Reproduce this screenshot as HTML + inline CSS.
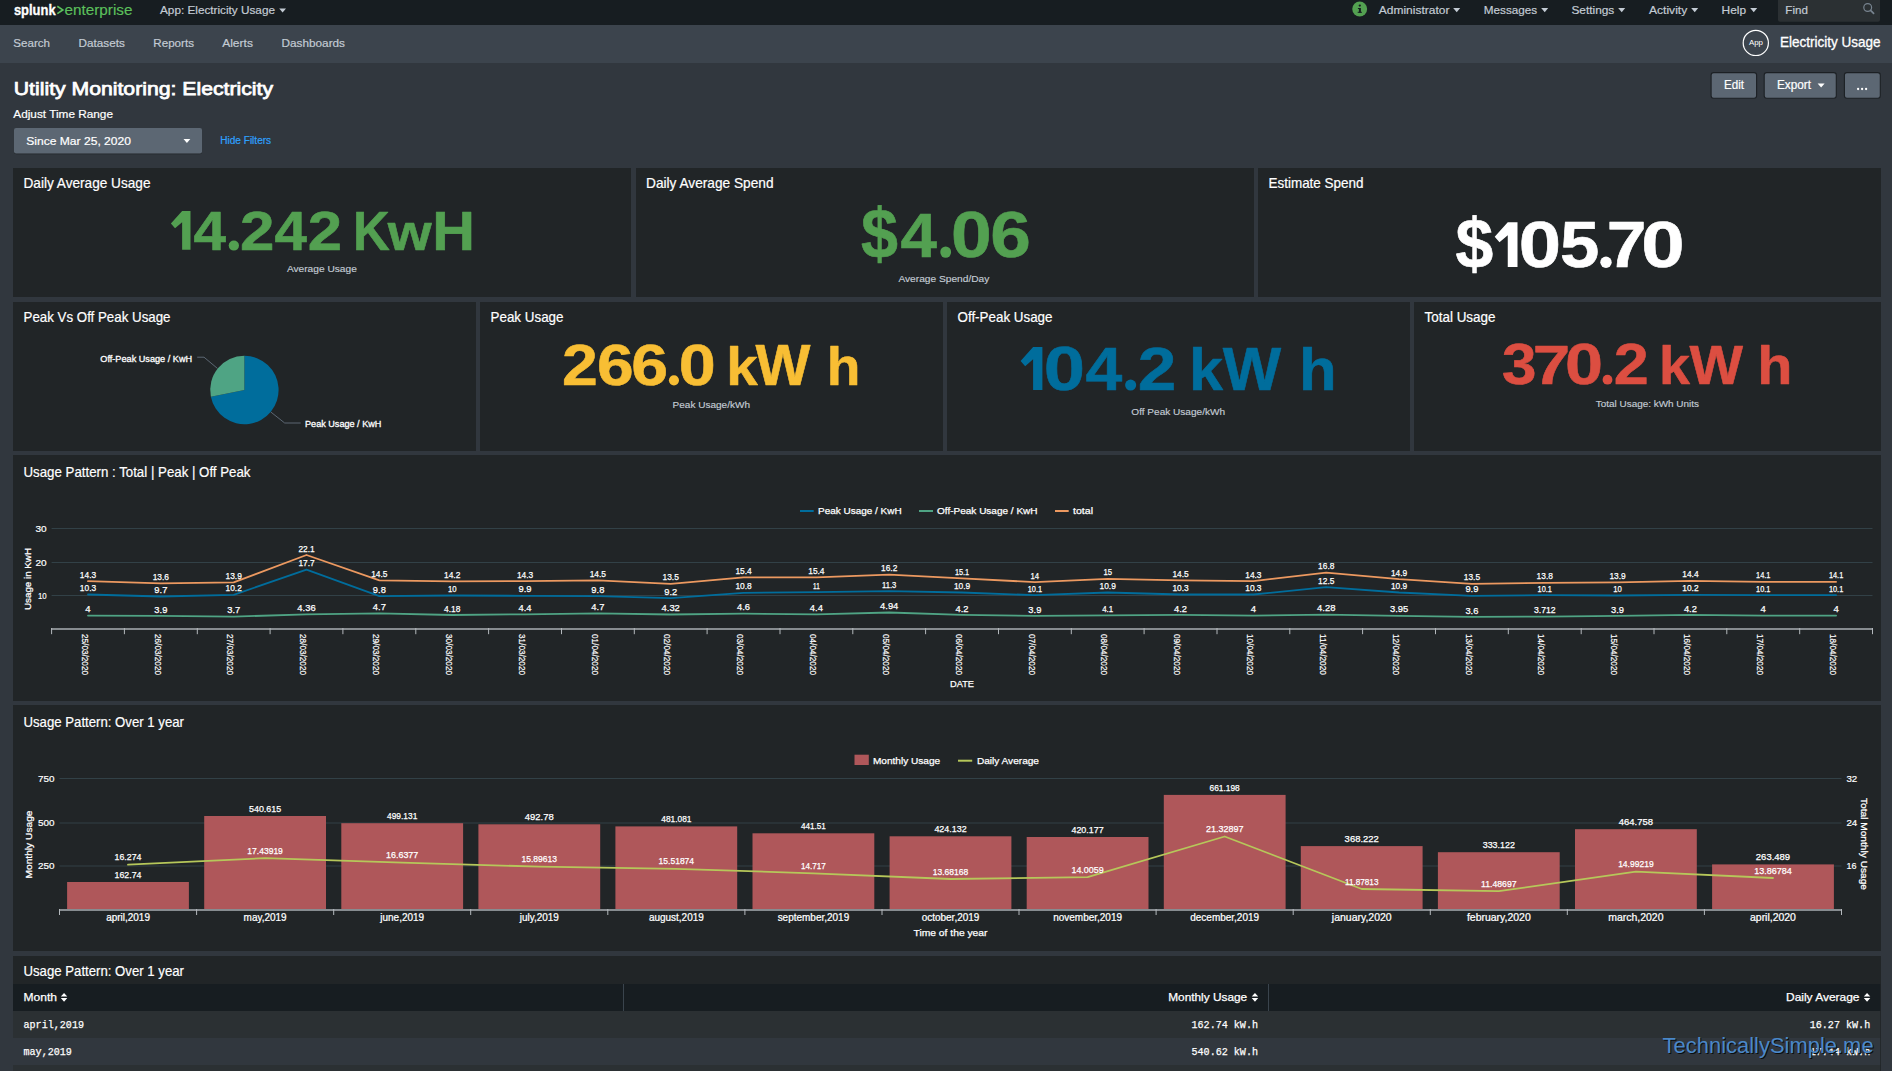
<!DOCTYPE html>
<html lang="en"><head><meta charset="utf-8"><title>Utility Monitoring: Electricity | Splunk</title>
<style>
html,body{margin:0;padding:0}
body{width:1892px;height:1071px;overflow:hidden;position:relative;background:#31373e;font-family:"Liberation Sans", sans-serif;}
svg{display:block;overflow:visible}
svg text{font-family:"Liberation Sans", sans-serif;white-space:pre}
section{overflow:hidden}
</style></head>
<body>
<header id="topbar" style="position:absolute;left:0;top:0;width:1892px;height:25px;background:#171d21"><svg width="1892" height="25" viewBox="0 0 1892 25"><text x="13.90" y="14.80" font-size="15.4" fill="#fff" font-weight="700" textLength="41.70" lengthAdjust="spacingAndGlyphs" stroke="#fff" stroke-width="0.35">splunk</text><path d="M57.3 6.3L62.8 9.9L57.3 13.6" fill="none" stroke="#5cc05c" stroke-width="1.7"/><text x="64.50" y="14.80" font-size="15" fill="#5cc05c" textLength="67.90" lengthAdjust="spacingAndGlyphs" stroke="#5cc05c" stroke-width="0.15">enterprise</text><text x="160.00" y="14.30" font-size="11.6" fill="#c3cbd4" textLength="115.00" lengthAdjust="spacingAndGlyphs" stroke="#c3cbd4" stroke-width="0.2">App: Electricity Usage</text><path d="M279.2 8.5H286.0L282.60 12.5Z" fill="#c3cbd4"/><circle cx="1359.7" cy="8.95" r="7.45" fill="#53a051"/><rect x="1358.9" y="8" width="2" height="4.6" fill="#171d21"/><circle cx="1359.8" cy="5.6" r="1.15" fill="#171d21"/><rect x="1357.9" y="8" width="2" height="1" fill="#171d21"/><rect x="1357.7" y="11.8" width="4.2" height="1" fill="#171d21"/><text x="1378.80" y="14.00" font-size="11.5" fill="#c3cbd4" textLength="70.60" lengthAdjust="spacingAndGlyphs" stroke="#c3cbd4" stroke-width="0.2">Administrator</text><path d="M1453.2 7.9H1460.2L1456.70 12.2Z" fill="#c3cbd4"/><text x="1483.80" y="14.00" font-size="11.5" fill="#c3cbd4" textLength="53.40" lengthAdjust="spacingAndGlyphs" stroke="#c3cbd4" stroke-width="0.2">Messages</text><path d="M1541.2 7.9H1548.2L1544.70 12.2Z" fill="#c3cbd4"/><text x="1571.40" y="14.00" font-size="11.5" fill="#c3cbd4" textLength="42.90" lengthAdjust="spacingAndGlyphs" stroke="#c3cbd4" stroke-width="0.2">Settings</text><path d="M1618.2 7.9H1625.2L1621.70 12.2Z" fill="#c3cbd4"/><text x="1649.00" y="14.00" font-size="11.5" fill="#c3cbd4" textLength="38.20" lengthAdjust="spacingAndGlyphs" stroke="#c3cbd4" stroke-width="0.2">Activity</text><path d="M1691.2 7.9H1698.2L1694.70 12.2Z" fill="#c3cbd4"/><text x="1721.60" y="14.00" font-size="11.5" fill="#c3cbd4" textLength="24.50" lengthAdjust="spacingAndGlyphs" stroke="#c3cbd4" stroke-width="0.2">Help</text><path d="M1750.2 7.9H1757.2L1753.70 12.2Z" fill="#c3cbd4"/><path d="M1778 0H1880V19.8a2 2 0 0 1-2 2H1780a2 2 0 0 1-2-2Z" fill="#2b3033"/><text x="1785.30" y="14.00" font-size="11.5" fill="#c3cbd4" textLength="22.60" lengthAdjust="spacingAndGlyphs" stroke="#c3cbd4" stroke-width="0.2">Find</text><circle cx="1867.7" cy="7.5" r="3.9" fill="none" stroke="#77838f" stroke-width="1.2"/><path d="M1870.6 10.4L1873.6 13.4" stroke="#77838f" stroke-width="1.7" stroke-linecap="round"/></svg></header>
<nav id="appnav" style="position:absolute;left:0;top:25px;width:1892px;height:38px;background:#3c444d"><svg width="1892" height="38" viewBox="0 25 1892 38"><text x="13.30" y="47.10" font-size="11.8" fill="#c3cbd4" textLength="36.70" lengthAdjust="spacingAndGlyphs" stroke="#c3cbd4" stroke-width="0.2">Search</text><text x="78.60" y="47.10" font-size="11.8" fill="#c3cbd4" textLength="46.30" lengthAdjust="spacingAndGlyphs" stroke="#c3cbd4" stroke-width="0.2">Datasets</text><text x="153.30" y="47.10" font-size="11.8" fill="#c3cbd4" textLength="40.70" lengthAdjust="spacingAndGlyphs" stroke="#c3cbd4" stroke-width="0.2">Reports</text><text x="222.20" y="47.10" font-size="11.8" fill="#c3cbd4" textLength="30.70" lengthAdjust="spacingAndGlyphs" stroke="#c3cbd4" stroke-width="0.2">Alerts</text><text x="281.50" y="47.10" font-size="11.8" fill="#c3cbd4" textLength="63.50" lengthAdjust="spacingAndGlyphs" stroke="#c3cbd4" stroke-width="0.2">Dashboards</text><circle cx="1755.8" cy="42.9" r="12.6" fill="none" stroke="#fff" stroke-width="1.2"/><text x="1749.00" y="45.20" font-size="7.5" fill="#fff" textLength="14.00" lengthAdjust="spacingAndGlyphs">App</text><text x="1780.00" y="47.10" font-size="14.1" fill="#fff" textLength="100.60" lengthAdjust="spacingAndGlyphs" stroke="#fff" stroke-width="0.3">Electricity Usage</text></svg></nav>
<div id="dash-header" style="position:absolute;left:0;top:63px;width:1892px;height:105px"><svg width="1892" height="105" viewBox="0 63 1892 105"><text x="13.80" y="95.20" font-size="18.6" fill="#fff" textLength="259.20" lengthAdjust="spacingAndGlyphs" stroke="#fff" stroke-width="0.75">Utility Monitoring: Electricity</text><text x="13.30" y="118.30" font-size="11.8" fill="#fff" textLength="99.70" lengthAdjust="spacingAndGlyphs" stroke="#fff" stroke-width="0.2">Adjust Time Range</text><rect x="14" y="128.4" width="188" height="25.8" rx="2.5" fill="#22272b"/><rect x="14" y="128" width="188" height="25.6" rx="2" fill="#5c6773"/><text x="26.20" y="145.10" font-size="11.8" fill="#fff" textLength="104.80" lengthAdjust="spacingAndGlyphs" stroke="#fff" stroke-width="0.2">Since Mar 25, 2020</text><path d="M183.5 138.9H190.3L186.90 143.1Z" fill="#fff"/><text x="220.30" y="144.20" font-size="10" fill="#2ea1ff" textLength="50.80" lengthAdjust="spacingAndGlyphs" stroke="#2ea1ff" stroke-width="0.2">Hide Filters</text><rect x="1711.1" y="72.6" width="45.5" height="25.7" rx="2.5" fill="#5c6773" stroke="#1c2024" stroke-width="1.1"/><rect x="1764.2" y="72.6" width="72.1" height="25.7" rx="2.5" fill="#5c6773" stroke="#1c2024" stroke-width="1.1"/><rect x="1844.4" y="72.6" width="35.9" height="25.7" rx="2.5" fill="#5c6773" stroke="#1c2024" stroke-width="1.1"/><text x="1724.00" y="89.20" font-size="12" fill="#fff" textLength="20.00" lengthAdjust="spacingAndGlyphs" stroke="#fff" stroke-width="0.2">Edit</text><text x="1777.00" y="89.20" font-size="12" fill="#fff" textLength="34.00" lengthAdjust="spacingAndGlyphs" stroke="#fff" stroke-width="0.2">Export</text><path d="M1817.6 83.5H1824.6L1821.10 87.5Z" fill="#fff"/><circle cx="1858.1" cy="89" r="1.15" fill="#fff"/><circle cx="1862.1" cy="89" r="1.15" fill="#fff"/><circle cx="1866.1" cy="89" r="1.15" fill="#fff"/></svg></div>
<section id="p-daily-usage" style="position:absolute;left:13px;top:168px;width:618px;height:129px;background:#212527"><svg width="618" height="129" viewBox="13 168 618 129"><text x="23.50" y="188.30" font-size="14.1" fill="#fff" textLength="127.00" lengthAdjust="spacingAndGlyphs" stroke="#fff" stroke-width="0.2">Daily Average Usage</text><path d="M182.13 210.90L190.50 210.90L190.50 249.80L182.13 249.80L182.13 222.18L175.02 228.37L170.90 223.58Z" fill="#53a051"/><text transform="translate(193.42,249.50) scale(0.5843,0.5567)" font-size="100" font-weight="700" fill="#53a051" stroke="#53a051" stroke-width="1.052" stroke-linejoin="round">4</text><ellipse cx="233.85" cy="245.60" rx="5.15" ry="5.00" fill="#53a051"/><text transform="translate(240.05,249.50) scale(0.6190,0.5571)" font-size="100" font-weight="700" fill="#53a051" stroke="#53a051" stroke-width="1.020" stroke-linejoin="round">2</text><text transform="translate(274.62,249.50) scale(0.5825,0.5567)" font-size="100" font-weight="700" fill="#53a051" stroke="#53a051" stroke-width="1.053" stroke-linejoin="round">4</text><text transform="translate(307.76,249.50) scale(0.6169,0.5571)" font-size="100" font-weight="700" fill="#53a051" stroke="#53a051" stroke-width="1.022" stroke-linejoin="round">2</text><text transform="translate(353.09,249.50) scale(0.5093,0.5567)" font-size="100" font-weight="700" fill="#53a051" stroke="#53a051" stroke-width="1.126" stroke-linejoin="round">K</text><text transform="translate(387.77,249.50) scale(0.5647,0.5129)" font-size="100" font-weight="700" fill="#53a051" stroke="#53a051" stroke-width="1.114" stroke-linejoin="round">w</text><text transform="translate(432.24,249.50) scale(0.5919,0.5567)" font-size="100" font-weight="700" fill="#53a051" stroke="#53a051" stroke-width="1.045" stroke-linejoin="round">H</text><text x="286.90" y="271.90" font-size="9.3" fill="#c3cbd4" textLength="69.90" lengthAdjust="spacingAndGlyphs" stroke="#c3cbd4" stroke-width="0.15">Average Usage</text></svg></section>
<section id="p-daily-spend" style="position:absolute;left:636px;top:168px;width:618px;height:129px;background:#212527"><svg width="618" height="129" viewBox="636 168 618 129"><text x="646.00" y="188.30" font-size="14.1" fill="#fff" textLength="127.50" lengthAdjust="spacingAndGlyphs" stroke="#fff" stroke-width="0.2">Daily Average Spend</text><text transform="translate(860.92,258.20) scale(0.6656,0.7006)" font-size="100" font-weight="700" fill="#53a051" stroke="#53a051" stroke-width="0.878" stroke-linejoin="round">$</text><text transform="translate(900.61,256.60) scale(0.6553,0.6381)" font-size="100" font-weight="700" fill="#53a051" stroke="#53a051" stroke-width="0.928" stroke-linejoin="round">4</text><ellipse cx="945.70" cy="252.10" rx="5.40" ry="5.70" fill="#53a051"/><text transform="translate(951.11,257.07) scale(0.7317,0.6426)" font-size="100" font-weight="700" fill="#53a051" stroke="#53a051" stroke-width="0.873" stroke-linejoin="round">0</text><text transform="translate(990.33,257.07) scale(0.7302,0.6426)" font-size="100" font-weight="700" fill="#53a051" stroke="#53a051" stroke-width="0.874" stroke-linejoin="round">6</text><text x="898.40" y="282.10" font-size="9.3" fill="#c3cbd4" textLength="91.00" lengthAdjust="spacingAndGlyphs" stroke="#c3cbd4" stroke-width="0.15">Average Spend/Day</text></svg></section>
<section id="p-estimate" style="position:absolute;left:1258px;top:168px;width:623px;height:129px;background:#212527"><svg width="623" height="129" viewBox="1258 168 623 129"><text x="1268.50" y="188.30" font-size="14.1" fill="#fff" textLength="95.00" lengthAdjust="spacingAndGlyphs" stroke="#fff" stroke-width="0.2">Estimate Spend</text><text transform="translate(1455.40,268.27) scale(0.6789,0.7043)" font-size="100" font-weight="700" fill="#fff" stroke="#fff" stroke-width="0.868" stroke-linejoin="round">$</text><path d="M1507.76 222.30L1517.50 222.30L1517.50 266.90L1507.76 266.90L1507.76 235.23L1499.49 242.33L1494.70 236.84Z" fill="#fff"/><text transform="translate(1518.69,267.17) scale(0.7612,0.6455)" font-size="100" font-weight="700" fill="#fff" stroke="#fff" stroke-width="0.853" stroke-linejoin="round">0</text><text transform="translate(1560.12,267.17) scale(0.7075,0.6478)" font-size="100" font-weight="700" fill="#fff" stroke="#fff" stroke-width="0.885" stroke-linejoin="round">5</text><ellipse cx="1606.00" cy="262.20" rx="5.70" ry="5.70" fill="#fff"/><text transform="translate(1606.83,266.60) scale(0.7139,0.6395)" font-size="100" font-weight="700" fill="#fff" stroke="#fff" stroke-width="0.887" stroke-linejoin="round">7</text><text transform="translate(1641.31,267.17) scale(0.7801,0.6455)" font-size="100" font-weight="700" fill="#fff" stroke="#fff" stroke-width="0.842" stroke-linejoin="round">0</text></svg></section>
<section id="p-pie" style="position:absolute;left:13px;top:302px;width:463px;height:149px;background:#212527"><svg width="463" height="149" viewBox="13 302 463 149"><text x="23.50" y="322.10" font-size="14.1" fill="#fff" textLength="147.00" lengthAdjust="spacingAndGlyphs" stroke="#fff" stroke-width="0.2">Peak Vs Off Peak Usage</text><path d="M244.4 390L244.4 355.8A34.2 34.2 0 1 1 210.87 396.72Z" fill="#006d9c"/><path d="M244.4 390L210.87 396.72A34.2 34.2 0 0 1 244.4 355.8Z" fill="#4fa484"/><path d="M197.2 357.2H204L217.3 368.3" fill="none" stroke="#5c6773" stroke-width="1"/><path d="M270.8 412L284.7 423H300.7" fill="none" stroke="#5c6773" stroke-width="1"/><text x="100.30" y="362.00" font-size="9.4" fill="#fff" textLength="91.80" lengthAdjust="spacingAndGlyphs" stroke="#fff" stroke-width="0.3">Off-Peak Usage / KwH</text><text x="305.00" y="427.20" font-size="9.4" fill="#fff" textLength="76.40" lengthAdjust="spacingAndGlyphs" stroke="#fff" stroke-width="0.3">Peak Usage / KwH</text></svg></section>
<section id="p-peak" style="position:absolute;left:480px;top:302px;width:463px;height:149px;background:#212527"><svg width="463" height="149" viewBox="480 302 463 149"><text x="490.50" y="322.10" font-size="14.1" fill="#fff" textLength="73.00" lengthAdjust="spacingAndGlyphs" stroke="#fff" stroke-width="0.2">Peak Usage</text><text transform="translate(562.07,384.70) scale(0.6439,0.5714)" font-size="100" font-weight="700" fill="#f8be34" stroke="#f8be34" stroke-width="0.987" stroke-linejoin="round">2</text><text transform="translate(597.08,384.64) scale(0.6599,0.5706)" font-size="100" font-weight="700" fill="#f8be34" stroke="#f8be34" stroke-width="0.975" stroke-linejoin="round">6</text><text transform="translate(631.18,384.64) scale(0.6620,0.5706)" font-size="100" font-weight="700" fill="#f8be34" stroke="#f8be34" stroke-width="0.974" stroke-linejoin="round">6</text><ellipse cx="673.95" cy="380.30" rx="5.05" ry="5.10" fill="#f8be34"/><text transform="translate(678.87,384.64) scale(0.6644,0.5706)" font-size="100" font-weight="700" fill="#f8be34" stroke="#f8be34" stroke-width="0.972" stroke-linejoin="round">0</text><text transform="translate(726.35,384.70) scale(0.5664,0.5410)" font-size="100" font-weight="700" fill="#f8be34" stroke="#f8be34" stroke-width="1.084" stroke-linejoin="round">k</text><text transform="translate(755.44,384.70) scale(0.5818,0.5698)" font-size="100" font-weight="700" fill="#f8be34" stroke="#f8be34" stroke-width="1.042" stroke-linejoin="round">W</text><text transform="translate(826.75,384.70) scale(0.5511,0.5410)" font-size="100" font-weight="700" fill="#f8be34" stroke="#f8be34" stroke-width="1.099" stroke-linejoin="round">h</text><text x="672.60" y="407.80" font-size="9.3" fill="#c3cbd4" textLength="77.40" lengthAdjust="spacingAndGlyphs" stroke="#c3cbd4" stroke-width="0.15">Peak Usage/kWh</text></svg></section>
<section id="p-offpeak" style="position:absolute;left:947px;top:302px;width:463px;height:149px;background:#212527"><svg width="463" height="149" viewBox="947 302 463 149"><text x="957.50" y="322.10" font-size="14.1" fill="#fff" textLength="95.00" lengthAdjust="spacingAndGlyphs" stroke="#fff" stroke-width="0.2">Off-Peak Usage</text><path d="M1033.09 346.90L1042.40 346.90L1042.40 389.90L1033.09 389.90L1033.09 359.37L1025.18 366.21L1020.60 360.92Z" fill="#006d9c"/><text transform="translate(1043.66,389.89) scale(0.7422,0.6243)" font-size="100" font-weight="700" fill="#006d9c" stroke="#006d9c" stroke-width="0.878" stroke-linejoin="round">0</text><text transform="translate(1085.40,389.60) scale(0.6609,0.6163)" font-size="100" font-weight="700" fill="#006d9c" stroke="#006d9c" stroke-width="0.940" stroke-linejoin="round">4</text><ellipse cx="1130.65" cy="385.05" rx="5.55" ry="5.55" fill="#006d9c"/><text transform="translate(1137.69,389.60) scale(0.6937,0.6201)" font-size="100" font-weight="700" fill="#006d9c" stroke="#006d9c" stroke-width="0.913" stroke-linejoin="round">2</text><text transform="translate(1188.93,389.60) scale(0.6115,0.5851)" font-size="100" font-weight="700" fill="#006d9c" stroke="#006d9c" stroke-width="1.003" stroke-linejoin="round">k</text><text transform="translate(1222.74,389.60) scale(0.6190,0.6163)" font-size="100" font-weight="700" fill="#006d9c" stroke="#006d9c" stroke-width="0.971" stroke-linejoin="round">W</text><text transform="translate(1299.00,389.60) scale(0.6159,0.5851)" font-size="100" font-weight="700" fill="#006d9c" stroke="#006d9c" stroke-width="0.999" stroke-linejoin="round">h</text><text x="1131.30" y="414.70" font-size="9.3" fill="#c3cbd4" textLength="93.80" lengthAdjust="spacingAndGlyphs" stroke="#c3cbd4" stroke-width="0.15">Off Peak Usage/kWh</text></svg></section>
<section id="p-total" style="position:absolute;left:1414px;top:302px;width:467px;height:149px;background:#212527"><svg width="467" height="149" viewBox="1414 302 467 149"><text x="1424.50" y="322.10" font-size="14.1" fill="#fff" textLength="71.00" lengthAdjust="spacingAndGlyphs" stroke="#fff" stroke-width="0.2">Total Usage</text><text transform="translate(1501.98,383.76) scale(0.6196,0.5666)" font-size="100" font-weight="700" fill="#dc4e41" stroke="#dc4e41" stroke-width="1.012" stroke-linejoin="round">3</text><text transform="translate(1532.71,383.60) scale(0.6734,0.5611)" font-size="100" font-weight="700" fill="#dc4e41" stroke="#dc4e41" stroke-width="0.972" stroke-linejoin="round">7</text><text transform="translate(1565.10,383.85) scale(0.6834,0.5678)" font-size="100" font-weight="700" fill="#dc4e41" stroke="#dc4e41" stroke-width="0.959" stroke-linejoin="round">0</text><ellipse cx="1607.50" cy="379.70" rx="4.90" ry="4.90" fill="#dc4e41"/><text transform="translate(1613.72,383.60) scale(0.6294,0.5643)" font-size="100" font-weight="700" fill="#dc4e41" stroke="#dc4e41" stroke-width="1.005" stroke-linejoin="round">2</text><text transform="translate(1659.12,383.60) scale(0.5561,0.5327)" font-size="100" font-weight="700" fill="#dc4e41" stroke="#dc4e41" stroke-width="1.102" stroke-linejoin="round">k</text><text transform="translate(1689.54,383.60) scale(0.5669,0.5611)" font-size="100" font-weight="700" fill="#dc4e41" stroke="#dc4e41" stroke-width="1.064" stroke-linejoin="round">W</text><text transform="translate(1757.28,383.60) scale(0.5762,0.5327)" font-size="100" font-weight="700" fill="#dc4e41" stroke="#dc4e41" stroke-width="1.082" stroke-linejoin="round">h</text><text x="1595.80" y="406.60" font-size="9.3" fill="#c3cbd4" textLength="103.20" lengthAdjust="spacingAndGlyphs" stroke="#c3cbd4" stroke-width="0.15">Total Usage: kWh Units</text></svg></section>
<section id="p-line" style="position:absolute;left:13px;top:455px;width:1868px;height:246px;background:#212527"><svg width="1868" height="246" viewBox="13 455 1868 246"><text x="23.50" y="476.70" font-size="14.1" fill="#fff" textLength="227.00" lengthAdjust="spacingAndGlyphs" stroke="#fff" stroke-width="0.2">Usage Pattern : Total | Peak | Off Peak</text><path d="M800 511H813.7" stroke="#006d9c" stroke-width="2"/><text x="818.00" y="514.20" font-size="9.7" fill="#fff" textLength="83.60" lengthAdjust="spacingAndGlyphs" stroke="#fff" stroke-width="0.25">Peak Usage / KwH</text><path d="M919 511H933" stroke="#4fa484" stroke-width="2"/><text x="937.00" y="514.20" font-size="9.7" fill="#fff" textLength="100.60" lengthAdjust="spacingAndGlyphs" stroke="#fff" stroke-width="0.25">Off-Peak Usage / KwH</text><path d="M1055 511H1068.7" stroke="#ec9960" stroke-width="2"/><text x="1073.00" y="514.20" font-size="9.7" fill="#fff" textLength="20.00" lengthAdjust="spacingAndGlyphs" stroke="#fff" stroke-width="0.25">total</text><path d="M51.6 595.5H1872.5" stroke="#324147" stroke-width="1"/><text x="46.60" y="599.10" font-size="9.4" fill="#fff" text-anchor="end" textLength="8.70" lengthAdjust="spacingAndGlyphs" stroke="#fff" stroke-width="0.2">10</text><path d="M51.6 562.5H1872.5" stroke="#324147" stroke-width="1"/><text x="46.60" y="566.00" font-size="9.4" fill="#fff" text-anchor="end" textLength="11.20" lengthAdjust="spacingAndGlyphs" stroke="#fff" stroke-width="0.2">20</text><path d="M51.6 528.5H1872.5" stroke="#324147" stroke-width="1"/><text x="46.60" y="532.30" font-size="9.4" fill="#fff" text-anchor="end" textLength="11.20" lengthAdjust="spacingAndGlyphs" stroke="#fff" stroke-width="0.2">30</text><text transform="translate(31.3,579) rotate(-90)" font-size="9.7" fill="#fff" stroke="#fff" stroke-width="0.25" text-anchor="middle" textLength="62" lengthAdjust="spacingAndGlyphs">Usage in KwH</text><polyline points="88.0,594.5 160.9,596.5 233.7,594.8 306.5,569.7 379.4,596.2 452.2,595.5 525.0,595.8 597.9,596.2 670.7,598.2 743.5,592.8 816.4,592.1 889.2,591.1 962.0,592.5 1034.9,595.2 1107.7,592.5 1180.6,594.5 1253.4,594.5 1326.2,587.1 1399.1,592.5 1471.9,595.8 1544.7,595.2 1617.6,595.5 1690.4,594.8 1763.2,595.2 1836.1,595.2" fill="none" stroke="#006d9c" stroke-width="1.8" stroke-linejoin="round" stroke-linecap="round"/><polyline points="88.0,615.6 160.9,615.9 233.7,616.6 306.5,614.4 379.4,613.3 452.2,615.0 525.0,614.3 597.9,613.3 670.7,614.5 743.5,613.6 816.4,614.3 889.2,612.5 962.0,614.9 1034.9,615.9 1107.7,615.3 1180.6,614.9 1253.4,615.6 1326.2,614.7 1399.1,615.8 1471.9,616.9 1544.7,616.6 1617.6,615.9 1690.4,614.9 1763.2,615.6 1836.1,615.6" fill="none" stroke="#4fa484" stroke-width="1.8" stroke-linejoin="round" stroke-linecap="round"/><polyline points="88.0,581.1 160.9,583.4 233.7,582.4 306.5,555.0 379.4,580.4 452.2,581.4 525.0,581.1 597.9,580.4 670.7,583.8 743.5,577.4 816.4,577.4 889.2,574.7 962.0,578.4 1034.9,582.1 1107.7,578.8 1180.6,580.4 1253.4,581.1 1326.2,572.7 1399.1,579.1 1471.9,583.8 1544.7,582.8 1617.6,582.4 1690.4,580.8 1763.2,581.8 1836.1,581.8" fill="none" stroke="#ec9960" stroke-width="1.8" stroke-linejoin="round" stroke-linecap="round"/><text x="79.87" y="591.10" font-size="9.2" fill="#fff" stroke="#fff" stroke-width="0.25" textLength="16.30" lengthAdjust="spacingAndGlyphs">10.3</text><text x="154.35" y="593.11" font-size="9.2" fill="#fff" stroke="#fff" stroke-width="0.25" textLength="13.00" lengthAdjust="spacingAndGlyphs">9.7</text><text x="225.54" y="591.43" font-size="9.2" fill="#fff" stroke="#fff" stroke-width="0.25" textLength="16.30" lengthAdjust="spacingAndGlyphs">10.2</text><text x="298.38" y="566.31" font-size="9.2" fill="#fff" stroke="#fff" stroke-width="0.25" textLength="16.30" lengthAdjust="spacingAndGlyphs">17.7</text><text x="372.86" y="592.77" font-size="9.2" fill="#fff" stroke="#fff" stroke-width="0.25" textLength="13.00" lengthAdjust="spacingAndGlyphs">9.8</text><text x="447.90" y="592.10" font-size="9.2" fill="#fff" stroke="#fff" stroke-width="0.25" textLength="8.60" lengthAdjust="spacingAndGlyphs">10</text><text x="518.53" y="592.44" font-size="9.2" fill="#fff" stroke="#fff" stroke-width="0.25" textLength="13.00" lengthAdjust="spacingAndGlyphs">9.9</text><text x="591.37" y="592.77" font-size="9.2" fill="#fff" stroke="#fff" stroke-width="0.25" textLength="13.00" lengthAdjust="spacingAndGlyphs">9.8</text><text x="664.21" y="594.78" font-size="9.2" fill="#fff" stroke="#fff" stroke-width="0.25" textLength="13.00" lengthAdjust="spacingAndGlyphs">9.2</text><text x="735.39" y="589.42" font-size="9.2" fill="#fff" stroke="#fff" stroke-width="0.25" textLength="16.30" lengthAdjust="spacingAndGlyphs">10.8</text><text x="813.08" y="588.75" font-size="9.2" fill="#fff" stroke="#fff" stroke-width="0.25" textLength="6.60" lengthAdjust="spacingAndGlyphs">11</text><text x="882.06" y="587.75" font-size="9.2" fill="#fff" stroke="#fff" stroke-width="0.25" textLength="14.30" lengthAdjust="spacingAndGlyphs">11.3</text><text x="953.90" y="589.09" font-size="9.2" fill="#fff" stroke="#fff" stroke-width="0.25" textLength="16.30" lengthAdjust="spacingAndGlyphs">10.9</text><text x="1027.74" y="591.76" font-size="9.2" fill="#fff" stroke="#fff" stroke-width="0.25" textLength="14.30" lengthAdjust="spacingAndGlyphs">10.1</text><text x="1099.57" y="589.09" font-size="9.2" fill="#fff" stroke="#fff" stroke-width="0.25" textLength="16.30" lengthAdjust="spacingAndGlyphs">10.9</text><text x="1172.41" y="591.10" font-size="9.2" fill="#fff" stroke="#fff" stroke-width="0.25" textLength="16.30" lengthAdjust="spacingAndGlyphs">10.3</text><text x="1245.24" y="591.10" font-size="9.2" fill="#fff" stroke="#fff" stroke-width="0.25" textLength="16.30" lengthAdjust="spacingAndGlyphs">10.3</text><text x="1318.08" y="583.73" font-size="9.2" fill="#fff" stroke="#fff" stroke-width="0.25" textLength="16.30" lengthAdjust="spacingAndGlyphs">12.5</text><text x="1390.92" y="589.09" font-size="9.2" fill="#fff" stroke="#fff" stroke-width="0.25" textLength="16.30" lengthAdjust="spacingAndGlyphs">10.9</text><text x="1465.40" y="592.44" font-size="9.2" fill="#fff" stroke="#fff" stroke-width="0.25" textLength="13.00" lengthAdjust="spacingAndGlyphs">9.9</text><text x="1537.59" y="591.76" font-size="9.2" fill="#fff" stroke="#fff" stroke-width="0.25" textLength="14.30" lengthAdjust="spacingAndGlyphs">10.1</text><text x="1613.27" y="592.10" font-size="9.2" fill="#fff" stroke="#fff" stroke-width="0.25" textLength="8.60" lengthAdjust="spacingAndGlyphs">10</text><text x="1682.26" y="591.43" font-size="9.2" fill="#fff" stroke="#fff" stroke-width="0.25" textLength="16.30" lengthAdjust="spacingAndGlyphs">10.2</text><text x="1756.10" y="591.76" font-size="9.2" fill="#fff" stroke="#fff" stroke-width="0.25" textLength="14.30" lengthAdjust="spacingAndGlyphs">10.1</text><text x="1828.93" y="591.76" font-size="9.2" fill="#fff" stroke="#fff" stroke-width="0.25" textLength="14.30" lengthAdjust="spacingAndGlyphs">10.1</text><text x="85.37" y="612.20" font-size="9.2" fill="#fff" stroke="#fff" stroke-width="0.25" textLength="5.30" lengthAdjust="spacingAndGlyphs">4</text><text x="154.35" y="612.53" font-size="9.2" fill="#fff" stroke="#fff" stroke-width="0.25" textLength="13.00" lengthAdjust="spacingAndGlyphs">3.9</text><text x="227.19" y="613.21" font-size="9.2" fill="#fff" stroke="#fff" stroke-width="0.25" textLength="13.00" lengthAdjust="spacingAndGlyphs">3.7</text><text x="297.38" y="610.99" font-size="9.2" fill="#fff" stroke="#fff" stroke-width="0.25" textLength="18.30" lengthAdjust="spacingAndGlyphs">4.36</text><text x="372.86" y="609.86" font-size="9.2" fill="#fff" stroke="#fff" stroke-width="0.25" textLength="13.00" lengthAdjust="spacingAndGlyphs">4.7</text><text x="444.05" y="611.60" font-size="9.2" fill="#fff" stroke="#fff" stroke-width="0.25" textLength="16.30" lengthAdjust="spacingAndGlyphs">4.18</text><text x="518.53" y="610.86" font-size="9.2" fill="#fff" stroke="#fff" stroke-width="0.25" textLength="13.00" lengthAdjust="spacingAndGlyphs">4.4</text><text x="591.37" y="609.86" font-size="9.2" fill="#fff" stroke="#fff" stroke-width="0.25" textLength="13.00" lengthAdjust="spacingAndGlyphs">4.7</text><text x="661.56" y="611.13" font-size="9.2" fill="#fff" stroke="#fff" stroke-width="0.25" textLength="18.30" lengthAdjust="spacingAndGlyphs">4.32</text><text x="737.04" y="610.19" font-size="9.2" fill="#fff" stroke="#fff" stroke-width="0.25" textLength="13.00" lengthAdjust="spacingAndGlyphs">4.6</text><text x="809.88" y="610.86" font-size="9.2" fill="#fff" stroke="#fff" stroke-width="0.25" textLength="13.00" lengthAdjust="spacingAndGlyphs">4.4</text><text x="880.06" y="609.05" font-size="9.2" fill="#fff" stroke="#fff" stroke-width="0.25" textLength="18.30" lengthAdjust="spacingAndGlyphs">4.94</text><text x="955.55" y="611.53" font-size="9.2" fill="#fff" stroke="#fff" stroke-width="0.25" textLength="13.00" lengthAdjust="spacingAndGlyphs">4.2</text><text x="1028.39" y="612.53" font-size="9.2" fill="#fff" stroke="#fff" stroke-width="0.25" textLength="13.00" lengthAdjust="spacingAndGlyphs">3.9</text><text x="1102.22" y="611.87" font-size="9.2" fill="#fff" stroke="#fff" stroke-width="0.25" textLength="11.00" lengthAdjust="spacingAndGlyphs">4.1</text><text x="1174.06" y="611.53" font-size="9.2" fill="#fff" stroke="#fff" stroke-width="0.25" textLength="13.00" lengthAdjust="spacingAndGlyphs">4.2</text><text x="1250.74" y="612.20" font-size="9.2" fill="#fff" stroke="#fff" stroke-width="0.25" textLength="5.30" lengthAdjust="spacingAndGlyphs">4</text><text x="1317.08" y="611.26" font-size="9.2" fill="#fff" stroke="#fff" stroke-width="0.25" textLength="18.30" lengthAdjust="spacingAndGlyphs">4.28</text><text x="1389.92" y="612.37" font-size="9.2" fill="#fff" stroke="#fff" stroke-width="0.25" textLength="18.30" lengthAdjust="spacingAndGlyphs">3.95</text><text x="1465.40" y="613.54" font-size="9.2" fill="#fff" stroke="#fff" stroke-width="0.25" textLength="13.00" lengthAdjust="spacingAndGlyphs">3.6</text><text x="1533.94" y="613.16" font-size="9.2" fill="#fff" stroke="#fff" stroke-width="0.25" textLength="21.60" lengthAdjust="spacingAndGlyphs">3.712</text><text x="1611.07" y="612.53" font-size="9.2" fill="#fff" stroke="#fff" stroke-width="0.25" textLength="13.00" lengthAdjust="spacingAndGlyphs">3.9</text><text x="1683.91" y="611.53" font-size="9.2" fill="#fff" stroke="#fff" stroke-width="0.25" textLength="13.00" lengthAdjust="spacingAndGlyphs">4.2</text><text x="1760.60" y="612.20" font-size="9.2" fill="#fff" stroke="#fff" stroke-width="0.25" textLength="5.30" lengthAdjust="spacingAndGlyphs">4</text><text x="1833.43" y="612.20" font-size="9.2" fill="#fff" stroke="#fff" stroke-width="0.25" textLength="5.30" lengthAdjust="spacingAndGlyphs">4</text><text x="79.87" y="577.70" font-size="9.2" fill="#fff" stroke="#fff" stroke-width="0.25" textLength="16.30" lengthAdjust="spacingAndGlyphs">14.3</text><text x="152.70" y="580.04" font-size="9.2" fill="#fff" stroke="#fff" stroke-width="0.25" textLength="16.30" lengthAdjust="spacingAndGlyphs">13.6</text><text x="225.54" y="579.03" font-size="9.2" fill="#fff" stroke="#fff" stroke-width="0.25" textLength="16.30" lengthAdjust="spacingAndGlyphs">13.9</text><text x="298.38" y="551.57" font-size="9.2" fill="#fff" stroke="#fff" stroke-width="0.25" textLength="16.30" lengthAdjust="spacingAndGlyphs">22.1</text><text x="371.21" y="577.02" font-size="9.2" fill="#fff" stroke="#fff" stroke-width="0.25" textLength="16.30" lengthAdjust="spacingAndGlyphs">14.5</text><text x="444.05" y="578.03" font-size="9.2" fill="#fff" stroke="#fff" stroke-width="0.25" textLength="16.30" lengthAdjust="spacingAndGlyphs">14.2</text><text x="516.88" y="577.70" font-size="9.2" fill="#fff" stroke="#fff" stroke-width="0.25" textLength="16.30" lengthAdjust="spacingAndGlyphs">14.3</text><text x="589.72" y="577.02" font-size="9.2" fill="#fff" stroke="#fff" stroke-width="0.25" textLength="16.30" lengthAdjust="spacingAndGlyphs">14.5</text><text x="662.56" y="580.38" font-size="9.2" fill="#fff" stroke="#fff" stroke-width="0.25" textLength="16.30" lengthAdjust="spacingAndGlyphs">13.5</text><text x="735.39" y="574.01" font-size="9.2" fill="#fff" stroke="#fff" stroke-width="0.25" textLength="16.30" lengthAdjust="spacingAndGlyphs">15.4</text><text x="808.23" y="574.01" font-size="9.2" fill="#fff" stroke="#fff" stroke-width="0.25" textLength="16.30" lengthAdjust="spacingAndGlyphs">15.4</text><text x="881.06" y="571.33" font-size="9.2" fill="#fff" stroke="#fff" stroke-width="0.25" textLength="16.30" lengthAdjust="spacingAndGlyphs">16.2</text><text x="954.90" y="575.01" font-size="9.2" fill="#fff" stroke="#fff" stroke-width="0.25" textLength="14.30" lengthAdjust="spacingAndGlyphs">15.1</text><text x="1030.59" y="578.70" font-size="9.2" fill="#fff" stroke="#fff" stroke-width="0.25" textLength="8.60" lengthAdjust="spacingAndGlyphs">14</text><text x="1103.42" y="575.35" font-size="9.2" fill="#fff" stroke="#fff" stroke-width="0.25" textLength="8.60" lengthAdjust="spacingAndGlyphs">15</text><text x="1172.41" y="577.02" font-size="9.2" fill="#fff" stroke="#fff" stroke-width="0.25" textLength="16.30" lengthAdjust="spacingAndGlyphs">14.5</text><text x="1245.24" y="577.70" font-size="9.2" fill="#fff" stroke="#fff" stroke-width="0.25" textLength="16.30" lengthAdjust="spacingAndGlyphs">14.3</text><text x="1318.08" y="569.32" font-size="9.2" fill="#fff" stroke="#fff" stroke-width="0.25" textLength="16.30" lengthAdjust="spacingAndGlyphs">16.8</text><text x="1390.92" y="575.69" font-size="9.2" fill="#fff" stroke="#fff" stroke-width="0.25" textLength="16.30" lengthAdjust="spacingAndGlyphs">14.9</text><text x="1463.75" y="580.38" font-size="9.2" fill="#fff" stroke="#fff" stroke-width="0.25" textLength="16.30" lengthAdjust="spacingAndGlyphs">13.5</text><text x="1536.59" y="579.37" font-size="9.2" fill="#fff" stroke="#fff" stroke-width="0.25" textLength="16.30" lengthAdjust="spacingAndGlyphs">13.8</text><text x="1609.42" y="579.03" font-size="9.2" fill="#fff" stroke="#fff" stroke-width="0.25" textLength="16.30" lengthAdjust="spacingAndGlyphs">13.9</text><text x="1682.26" y="577.36" font-size="9.2" fill="#fff" stroke="#fff" stroke-width="0.25" textLength="16.30" lengthAdjust="spacingAndGlyphs">14.4</text><text x="1756.10" y="578.37" font-size="9.2" fill="#fff" stroke="#fff" stroke-width="0.25" textLength="14.30" lengthAdjust="spacingAndGlyphs">14.1</text><text x="1828.93" y="578.37" font-size="9.2" fill="#fff" stroke="#fff" stroke-width="0.25" textLength="14.30" lengthAdjust="spacingAndGlyphs">14.1</text><path d="M51.1 629H1873.0" stroke="#878c90" stroke-width="2"/><path d="M51.6 628V634.2" stroke="#b4b9bd" stroke-width="1"/><path d="M124.4 628V634.2" stroke="#b4b9bd" stroke-width="1"/><path d="M197.3 628V634.2" stroke="#b4b9bd" stroke-width="1"/><path d="M270.1 628V634.2" stroke="#b4b9bd" stroke-width="1"/><path d="M342.9 628V634.2" stroke="#b4b9bd" stroke-width="1"/><path d="M415.8 628V634.2" stroke="#b4b9bd" stroke-width="1"/><path d="M488.6 628V634.2" stroke="#b4b9bd" stroke-width="1"/><path d="M561.5 628V634.2" stroke="#b4b9bd" stroke-width="1"/><path d="M634.3 628V634.2" stroke="#b4b9bd" stroke-width="1"/><path d="M707.1 628V634.2" stroke="#b4b9bd" stroke-width="1"/><path d="M780.0 628V634.2" stroke="#b4b9bd" stroke-width="1"/><path d="M852.8 628V634.2" stroke="#b4b9bd" stroke-width="1"/><path d="M925.6 628V634.2" stroke="#b4b9bd" stroke-width="1"/><path d="M998.5 628V634.2" stroke="#b4b9bd" stroke-width="1"/><path d="M1071.3 628V634.2" stroke="#b4b9bd" stroke-width="1"/><path d="M1144.1 628V634.2" stroke="#b4b9bd" stroke-width="1"/><path d="M1217.0 628V634.2" stroke="#b4b9bd" stroke-width="1"/><path d="M1289.8 628V634.2" stroke="#b4b9bd" stroke-width="1"/><path d="M1362.6 628V634.2" stroke="#b4b9bd" stroke-width="1"/><path d="M1435.5 628V634.2" stroke="#b4b9bd" stroke-width="1"/><path d="M1508.3 628V634.2" stroke="#b4b9bd" stroke-width="1"/><path d="M1581.2 628V634.2" stroke="#b4b9bd" stroke-width="1"/><path d="M1654.0 628V634.2" stroke="#b4b9bd" stroke-width="1"/><path d="M1726.8 628V634.2" stroke="#b4b9bd" stroke-width="1"/><path d="M1799.7 628V634.2" stroke="#b4b9bd" stroke-width="1"/><path d="M1872.5 628V634.2" stroke="#b4b9bd" stroke-width="1"/><text transform="translate(81.7,634) rotate(90)" font-size="9.8" fill="#fff" stroke="#fff" stroke-width="0.2" textLength="41" lengthAdjust="spacingAndGlyphs">25/03/2020</text><text transform="translate(154.6,634) rotate(90)" font-size="9.8" fill="#fff" stroke="#fff" stroke-width="0.2" textLength="41" lengthAdjust="spacingAndGlyphs">26/03/2020</text><text transform="translate(227.4,634) rotate(90)" font-size="9.8" fill="#fff" stroke="#fff" stroke-width="0.2" textLength="41" lengthAdjust="spacingAndGlyphs">27/03/2020</text><text transform="translate(300.2,634) rotate(90)" font-size="9.8" fill="#fff" stroke="#fff" stroke-width="0.2" textLength="41" lengthAdjust="spacingAndGlyphs">28/03/2020</text><text transform="translate(373.1,634) rotate(90)" font-size="9.8" fill="#fff" stroke="#fff" stroke-width="0.2" textLength="41" lengthAdjust="spacingAndGlyphs">29/03/2020</text><text transform="translate(445.9,634) rotate(90)" font-size="9.8" fill="#fff" stroke="#fff" stroke-width="0.2" textLength="41" lengthAdjust="spacingAndGlyphs">30/03/2020</text><text transform="translate(518.7,634) rotate(90)" font-size="9.8" fill="#fff" stroke="#fff" stroke-width="0.2" textLength="41" lengthAdjust="spacingAndGlyphs">31/03/2020</text><text transform="translate(591.6,634) rotate(90)" font-size="9.8" fill="#fff" stroke="#fff" stroke-width="0.2" textLength="41" lengthAdjust="spacingAndGlyphs">01/04/2020</text><text transform="translate(664.4,634) rotate(90)" font-size="9.8" fill="#fff" stroke="#fff" stroke-width="0.2" textLength="41" lengthAdjust="spacingAndGlyphs">02/04/2020</text><text transform="translate(737.2,634) rotate(90)" font-size="9.8" fill="#fff" stroke="#fff" stroke-width="0.2" textLength="41" lengthAdjust="spacingAndGlyphs">03/04/2020</text><text transform="translate(810.1,634) rotate(90)" font-size="9.8" fill="#fff" stroke="#fff" stroke-width="0.2" textLength="41" lengthAdjust="spacingAndGlyphs">04/04/2020</text><text transform="translate(882.9,634) rotate(90)" font-size="9.8" fill="#fff" stroke="#fff" stroke-width="0.2" textLength="41" lengthAdjust="spacingAndGlyphs">05/04/2020</text><text transform="translate(955.8,634) rotate(90)" font-size="9.8" fill="#fff" stroke="#fff" stroke-width="0.2" textLength="41" lengthAdjust="spacingAndGlyphs">06/04/2020</text><text transform="translate(1028.6,634) rotate(90)" font-size="9.8" fill="#fff" stroke="#fff" stroke-width="0.2" textLength="41" lengthAdjust="spacingAndGlyphs">07/04/2020</text><text transform="translate(1101.4,634) rotate(90)" font-size="9.8" fill="#fff" stroke="#fff" stroke-width="0.2" textLength="41" lengthAdjust="spacingAndGlyphs">08/04/2020</text><text transform="translate(1174.3,634) rotate(90)" font-size="9.8" fill="#fff" stroke="#fff" stroke-width="0.2" textLength="41" lengthAdjust="spacingAndGlyphs">09/04/2020</text><text transform="translate(1247.1,634) rotate(90)" font-size="9.8" fill="#fff" stroke="#fff" stroke-width="0.2" textLength="41" lengthAdjust="spacingAndGlyphs">10/04/2020</text><text transform="translate(1319.9,634) rotate(90)" font-size="9.8" fill="#fff" stroke="#fff" stroke-width="0.2" textLength="41" lengthAdjust="spacingAndGlyphs">11/04/2020</text><text transform="translate(1392.8,634) rotate(90)" font-size="9.8" fill="#fff" stroke="#fff" stroke-width="0.2" textLength="41" lengthAdjust="spacingAndGlyphs">12/04/2020</text><text transform="translate(1465.6,634) rotate(90)" font-size="9.8" fill="#fff" stroke="#fff" stroke-width="0.2" textLength="41" lengthAdjust="spacingAndGlyphs">13/04/2020</text><text transform="translate(1538.4,634) rotate(90)" font-size="9.8" fill="#fff" stroke="#fff" stroke-width="0.2" textLength="41" lengthAdjust="spacingAndGlyphs">14/04/2020</text><text transform="translate(1611.3,634) rotate(90)" font-size="9.8" fill="#fff" stroke="#fff" stroke-width="0.2" textLength="41" lengthAdjust="spacingAndGlyphs">15/04/2020</text><text transform="translate(1684.1,634) rotate(90)" font-size="9.8" fill="#fff" stroke="#fff" stroke-width="0.2" textLength="41" lengthAdjust="spacingAndGlyphs">16/04/2020</text><text transform="translate(1756.9,634) rotate(90)" font-size="9.8" fill="#fff" stroke="#fff" stroke-width="0.2" textLength="41" lengthAdjust="spacingAndGlyphs">17/04/2020</text><text transform="translate(1829.8,634) rotate(90)" font-size="9.8" fill="#fff" stroke="#fff" stroke-width="0.2" textLength="41" lengthAdjust="spacingAndGlyphs">18/04/2020</text><text x="950.00" y="686.90" font-size="9.7" fill="#fff" textLength="24.00" lengthAdjust="spacingAndGlyphs" stroke="#fff" stroke-width="0.25">DATE</text></svg></section>
<section id="p-bar" style="position:absolute;left:13px;top:705px;width:1868px;height:246px;background:#212527"><svg width="1868" height="246" viewBox="13 705 1868 246"><text x="23.50" y="726.70" font-size="14.1" fill="#fff" textLength="160.50" lengthAdjust="spacingAndGlyphs" stroke="#fff" stroke-width="0.2">Usage Pattern: Over 1 year</text><rect x="854.5" y="754.7" width="14.3" height="10.3" fill="#af575a"/><text x="872.90" y="763.80" font-size="9.7" fill="#fff" textLength="67.30" lengthAdjust="spacingAndGlyphs" stroke="#fff" stroke-width="0.25">Monthly Usage</text><path d="M958 760.7H972.2" stroke="#b6c75a" stroke-width="2"/><text x="976.90" y="763.80" font-size="9.7" fill="#fff" textLength="62.10" lengthAdjust="spacingAndGlyphs" stroke="#fff" stroke-width="0.25">Daily Average</text><path d="M59.5 866.0H1841.5" stroke="#324147" stroke-width="1"/><text x="54.50" y="869.20" font-size="9.4" fill="#fff" text-anchor="end" textLength="16.50" lengthAdjust="spacingAndGlyphs" stroke="#fff" stroke-width="0.2">250</text><text x="1846.40" y="869.20" font-size="9.4" fill="#fff" textLength="10.00" lengthAdjust="spacingAndGlyphs" stroke="#fff" stroke-width="0.2">16</text><path d="M59.5 823.0H1841.5" stroke="#324147" stroke-width="1"/><text x="54.50" y="826.00" font-size="9.4" fill="#fff" text-anchor="end" textLength="16.50" lengthAdjust="spacingAndGlyphs" stroke="#fff" stroke-width="0.2">500</text><text x="1846.40" y="826.00" font-size="9.4" fill="#fff" textLength="10.80" lengthAdjust="spacingAndGlyphs" stroke="#fff" stroke-width="0.2">24</text><path d="M59.5 778.5H1841.5" stroke="#324147" stroke-width="1"/><text x="54.50" y="782.00" font-size="9.4" fill="#fff" text-anchor="end" textLength="16.50" lengthAdjust="spacingAndGlyphs" stroke="#fff" stroke-width="0.2">750</text><text x="1846.40" y="782.00" font-size="9.4" fill="#fff" textLength="10.80" lengthAdjust="spacingAndGlyphs" stroke="#fff" stroke-width="0.2">32</text><text transform="translate(31.8,844.5) rotate(-90)" font-size="9.7" fill="#fff" stroke="#fff" stroke-width="0.25" text-anchor="middle" textLength="68" lengthAdjust="spacingAndGlyphs">Monthly Usage</text><text transform="translate(1861.4,844) rotate(90)" font-size="9.7" fill="#fff" stroke="#fff" stroke-width="0.25" text-anchor="middle" textLength="92" lengthAdjust="spacingAndGlyphs">Total Monthly Usage</text><rect x="67.1" y="882.0" width="121.8" height="27.2" fill="#af575a"/><rect x="204.2" y="816.0" width="121.8" height="93.2" fill="#af575a"/><rect x="341.3" y="823.2" width="121.8" height="86.0" fill="#af575a"/><rect x="478.4" y="824.3" width="121.8" height="84.9" fill="#af575a"/><rect x="615.4" y="826.4" width="121.8" height="82.8" fill="#af575a"/><rect x="752.5" y="833.3" width="121.8" height="75.9" fill="#af575a"/><rect x="889.6" y="836.3" width="121.8" height="72.9" fill="#af575a"/><rect x="1026.7" y="837.0" width="121.8" height="72.2" fill="#af575a"/><rect x="1163.8" y="794.9" width="121.8" height="114.3" fill="#af575a"/><rect x="1300.8" y="846.1" width="121.8" height="63.1" fill="#af575a"/><rect x="1437.9" y="852.2" width="121.8" height="57.0" fill="#af575a"/><rect x="1575.0" y="829.2" width="121.8" height="80.0" fill="#af575a"/><rect x="1712.1" y="864.4" width="121.8" height="44.8" fill="#af575a"/><polyline points="128.0,864.6 265.1,858.1 402.2,862.6 539.3,866.7 676.3,868.8 813.4,873.3 950.5,879.0 1087.6,877.2 1224.7,836.5 1361.7,889.0 1498.8,891.2 1635.9,871.7 1773.0,878.0" fill="none" stroke="#b6c75a" stroke-width="1.8" stroke-linejoin="round" stroke-linecap="round"/><text x="114.59" y="877.97" font-size="9.2" fill="#fff" stroke="#fff" stroke-width="0.25" textLength="26.90" lengthAdjust="spacingAndGlyphs">162.74</text><text x="249.02" y="811.95" font-size="9.2" fill="#fff" stroke="#fff" stroke-width="0.25" textLength="32.20" lengthAdjust="spacingAndGlyphs">540.615</text><text x="387.09" y="819.20" font-size="9.2" fill="#fff" stroke="#fff" stroke-width="0.25" textLength="30.20" lengthAdjust="spacingAndGlyphs">499.131</text><text x="524.82" y="820.31" font-size="9.2" fill="#fff" stroke="#fff" stroke-width="0.25" textLength="28.90" lengthAdjust="spacingAndGlyphs">492.78</text><text x="661.25" y="822.36" font-size="9.2" fill="#fff" stroke="#fff" stroke-width="0.25" textLength="30.20" lengthAdjust="spacingAndGlyphs">481.081</text><text x="800.97" y="829.27" font-size="9.2" fill="#fff" stroke="#fff" stroke-width="0.25" textLength="24.90" lengthAdjust="spacingAndGlyphs">441.51</text><text x="934.40" y="832.30" font-size="9.2" fill="#fff" stroke="#fff" stroke-width="0.25" textLength="32.20" lengthAdjust="spacingAndGlyphs">424.132</text><text x="1071.48" y="833.00" font-size="9.2" fill="#fff" stroke="#fff" stroke-width="0.25" textLength="32.20" lengthAdjust="spacingAndGlyphs">420.177</text><text x="1209.55" y="790.89" font-size="9.2" fill="#fff" stroke="#fff" stroke-width="0.25" textLength="30.20" lengthAdjust="spacingAndGlyphs">661.198</text><text x="1344.63" y="842.07" font-size="9.2" fill="#fff" stroke="#fff" stroke-width="0.25" textLength="34.20" lengthAdjust="spacingAndGlyphs">368.222</text><text x="1482.71" y="848.20" font-size="9.2" fill="#fff" stroke="#fff" stroke-width="0.25" textLength="32.20" lengthAdjust="spacingAndGlyphs">333.122</text><text x="1618.78" y="825.21" font-size="9.2" fill="#fff" stroke="#fff" stroke-width="0.25" textLength="34.20" lengthAdjust="spacingAndGlyphs">464.758</text><text x="1755.86" y="860.37" font-size="9.2" fill="#fff" stroke="#fff" stroke-width="0.25" textLength="34.20" lengthAdjust="spacingAndGlyphs">263.489</text><text x="114.59" y="860.20" font-size="9.2" fill="#fff" stroke="#fff" stroke-width="0.25" textLength="26.90" lengthAdjust="spacingAndGlyphs">16.274</text><text x="247.37" y="853.72" font-size="9.2" fill="#fff" stroke="#fff" stroke-width="0.25" textLength="35.50" lengthAdjust="spacingAndGlyphs">17.43919</text><text x="386.09" y="858.18" font-size="9.2" fill="#fff" stroke="#fff" stroke-width="0.25" textLength="32.20" lengthAdjust="spacingAndGlyphs">16.6377</text><text x="521.52" y="862.30" font-size="9.2" fill="#fff" stroke="#fff" stroke-width="0.25" textLength="35.50" lengthAdjust="spacingAndGlyphs">15.89613</text><text x="658.60" y="864.40" font-size="9.2" fill="#fff" stroke="#fff" stroke-width="0.25" textLength="35.50" lengthAdjust="spacingAndGlyphs">15.51874</text><text x="800.97" y="868.86" font-size="9.2" fill="#fff" stroke="#fff" stroke-width="0.25" textLength="24.90" lengthAdjust="spacingAndGlyphs">14.717</text><text x="932.75" y="874.61" font-size="9.2" fill="#fff" stroke="#fff" stroke-width="0.25" textLength="35.50" lengthAdjust="spacingAndGlyphs">13.68168</text><text x="1071.48" y="872.81" font-size="9.2" fill="#fff" stroke="#fff" stroke-width="0.25" textLength="32.20" lengthAdjust="spacingAndGlyphs">14.0059</text><text x="1205.90" y="832.10" font-size="9.2" fill="#fff" stroke="#fff" stroke-width="0.25" textLength="37.50" lengthAdjust="spacingAndGlyphs">21.32897</text><text x="1344.98" y="884.64" font-size="9.2" fill="#fff" stroke="#fff" stroke-width="0.25" textLength="33.50" lengthAdjust="spacingAndGlyphs">11.87813</text><text x="1481.06" y="886.81" font-size="9.2" fill="#fff" stroke="#fff" stroke-width="0.25" textLength="35.50" lengthAdjust="spacingAndGlyphs">11.48697</text><text x="1618.13" y="867.33" font-size="9.2" fill="#fff" stroke="#fff" stroke-width="0.25" textLength="35.50" lengthAdjust="spacingAndGlyphs">14.99219</text><text x="1754.21" y="873.58" font-size="9.2" fill="#fff" stroke="#fff" stroke-width="0.25" textLength="37.50" lengthAdjust="spacingAndGlyphs">13.86784</text><path d="M59.0 910H1842.0" stroke="#878c90" stroke-width="2"/><path d="M59.5 909V915" stroke="#b4b9bd" stroke-width="1"/><path d="M196.6 909V915" stroke="#b4b9bd" stroke-width="1"/><path d="M333.7 909V915" stroke="#b4b9bd" stroke-width="1"/><path d="M470.7 909V915" stroke="#b4b9bd" stroke-width="1"/><path d="M607.8 909V915" stroke="#b4b9bd" stroke-width="1"/><path d="M744.9 909V915" stroke="#b4b9bd" stroke-width="1"/><path d="M882.0 909V915" stroke="#b4b9bd" stroke-width="1"/><path d="M1019.0 909V915" stroke="#b4b9bd" stroke-width="1"/><path d="M1156.1 909V915" stroke="#b4b9bd" stroke-width="1"/><path d="M1293.2 909V915" stroke="#b4b9bd" stroke-width="1"/><path d="M1430.3 909V915" stroke="#b4b9bd" stroke-width="1"/><path d="M1567.3 909V915" stroke="#b4b9bd" stroke-width="1"/><path d="M1704.4 909V915" stroke="#b4b9bd" stroke-width="1"/><path d="M1841.5 909V915" stroke="#b4b9bd" stroke-width="1"/><text transform="translate(128.04,920.60) scale(0.925,1)" font-size="10.8" fill="#fff" stroke="#fff" stroke-width="0.25" text-anchor="middle">april,2019</text><text transform="translate(265.12,920.60) scale(0.925,1)" font-size="10.8" fill="#fff" stroke="#fff" stroke-width="0.25" text-anchor="middle">may,2019</text><text transform="translate(402.19,920.60) scale(0.925,1)" font-size="10.8" fill="#fff" stroke="#fff" stroke-width="0.25" text-anchor="middle">june,2019</text><text transform="translate(539.27,920.60) scale(0.925,1)" font-size="10.8" fill="#fff" stroke="#fff" stroke-width="0.25" text-anchor="middle">july,2019</text><text transform="translate(676.35,920.60) scale(0.925,1)" font-size="10.8" fill="#fff" stroke="#fff" stroke-width="0.25" text-anchor="middle">august,2019</text><text transform="translate(813.42,920.60) scale(0.925,1)" font-size="10.8" fill="#fff" stroke="#fff" stroke-width="0.25" text-anchor="middle">september,2019</text><text transform="translate(950.50,920.60) scale(0.925,1)" font-size="10.8" fill="#fff" stroke="#fff" stroke-width="0.25" text-anchor="middle">october,2019</text><text transform="translate(1087.58,920.60) scale(0.925,1)" font-size="10.8" fill="#fff" stroke="#fff" stroke-width="0.25" text-anchor="middle">november,2019</text><text transform="translate(1224.65,920.60) scale(0.925,1)" font-size="10.8" fill="#fff" stroke="#fff" stroke-width="0.25" text-anchor="middle">december,2019</text><text transform="translate(1361.73,920.60) scale(0.97,1)" font-size="10.8" fill="#fff" stroke="#fff" stroke-width="0.25" text-anchor="middle">january,2020</text><text transform="translate(1498.81,920.60) scale(0.97,1)" font-size="10.8" fill="#fff" stroke="#fff" stroke-width="0.25" text-anchor="middle">february,2020</text><text transform="translate(1635.88,920.60) scale(0.97,1)" font-size="10.8" fill="#fff" stroke="#fff" stroke-width="0.25" text-anchor="middle">march,2020</text><text transform="translate(1772.96,920.60) scale(0.97,1)" font-size="10.8" fill="#fff" stroke="#fff" stroke-width="0.25" text-anchor="middle">april,2020</text><text x="913.50" y="936.00" font-size="9.7" fill="#fff" textLength="74.00" lengthAdjust="spacingAndGlyphs" stroke="#fff" stroke-width="0.25">Time of the year</text></svg></section>
<section id="p-table" style="position:absolute;left:13px;top:956px;width:1868px;height:115px;background:#212527"><svg width="1868" height="115" viewBox="13 956 1868 115"><text x="23.50" y="976.10" font-size="14.1" fill="#fff" textLength="160.50" lengthAdjust="spacingAndGlyphs" stroke="#fff" stroke-width="0.2">Usage Pattern: Over 1 year</text><rect x="13" y="984" width="1867.2" height="27" fill="#171d21"/><rect x="13" y="1011" width="1867.2" height="27" fill="#2b3033"/><rect x="13" y="1038" width="1867.2" height="27" fill="#31373e"/><rect x="13" y="1065" width="1867.2" height="6" fill="#2b3033"/><rect x="623" y="984" width="1" height="27" fill="#3a444d"/><rect x="1268" y="984" width="1" height="27" fill="#3a444d"/><text x="23.50" y="1001.10" font-size="11.5" fill="#fff" textLength="33.50" lengthAdjust="spacingAndGlyphs" stroke="#fff" stroke-width="0.25">Month</text><path d="M60.8 996.5999999999999L64.05 992.9L67.3 996.5999999999999Z M60.8 998.0999999999999L64.05 1001.6999999999999L67.3 998.0999999999999Z" fill="#fff"/><text x="1168.20" y="1001.10" font-size="11.5" fill="#fff" textLength="79.00" lengthAdjust="spacingAndGlyphs" stroke="#fff" stroke-width="0.25">Monthly Usage</text><path d="M1251.7 996.5999999999999L1254.95 992.9L1258.2 996.5999999999999Z M1251.7 998.0999999999999L1254.95 1001.6999999999999L1258.2 998.0999999999999Z" fill="#fff"/><text x="1786.00" y="1001.10" font-size="11.5" fill="#fff" textLength="73.50" lengthAdjust="spacingAndGlyphs" stroke="#fff" stroke-width="0.25">Daily Average</text><path d="M1863.8 996.5999999999999L1867.05 992.9L1870.3 996.5999999999999Z M1863.8 998.0999999999999L1867.05 1001.6999999999999L1870.3 998.0999999999999Z" fill="#fff"/><text x="23.50" y="1027.60" font-size="11.3" fill="#fff" style='font-family:"Liberation Mono", monospace' textLength="60.50" lengthAdjust="spacingAndGlyphs" stroke="#fff" stroke-width="0.25">april,2019</text><text x="23.50" y="1054.60" font-size="11.3" fill="#fff" style='font-family:"Liberation Mono", monospace' textLength="48.40" lengthAdjust="spacingAndGlyphs" stroke="#fff" stroke-width="0.25">may,2019</text><text x="1191.50" y="1027.60" font-size="11.3" fill="#fff" style='font-family:"Liberation Mono", monospace' textLength="66.50" lengthAdjust="spacingAndGlyphs" stroke="#fff" stroke-width="0.25">162.74 kW.h</text><text x="1191.50" y="1054.60" font-size="11.3" fill="#fff" style='font-family:"Liberation Mono", monospace' textLength="66.50" lengthAdjust="spacingAndGlyphs" stroke="#fff" stroke-width="0.25">540.62 kW.h</text><text x="1809.70" y="1027.60" font-size="11.3" fill="#fff" style='font-family:"Liberation Mono", monospace' textLength="60.50" lengthAdjust="spacingAndGlyphs" stroke="#fff" stroke-width="0.25">16.27 kW.h</text><text x="1809.70" y="1054.60" font-size="11.3" fill="#fff" style='font-family:"Liberation Mono", monospace' textLength="60.50" lengthAdjust="spacingAndGlyphs" stroke="#fff" stroke-width="0.25">17.44 kW.h</text><text x="1663.60" y="1053.60" font-size="21.4" fill="#0a0c0e" textLength="211.00" lengthAdjust="spacingAndGlyphs">TechnicallySimple.me</text><text x="1662.60" y="1052.60" font-size="21.4" fill="#4a88c9" textLength="211.00" lengthAdjust="spacingAndGlyphs">TechnicallySimple.me</text></svg></section>
</body></html>
